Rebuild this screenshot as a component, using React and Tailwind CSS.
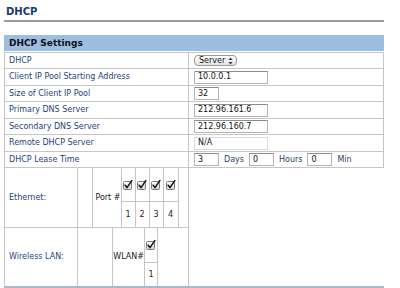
import React from "react";

function Check() {
  return (
    <svg width="10" height="10" viewBox="0 0 10 10" className="block">
      <defs>
        <linearGradient id="cbg" x1="0" y1="0" x2="0" y2="1">
          <stop offset="0" stopColor="#ffffff" />
          <stop offset="1" stopColor="#d4d4d4" />
        </linearGradient>
      </defs>
      <rect x="0.5" y="1.5" width="8" height="8" rx="1" fill="url(#cbg)" stroke="#7c7c7c" strokeWidth="1" />
      <path d="M2.2 5.2 L4 7.6 L8.8 0.6" fill="none" stroke="#111" strokeWidth="1.5" strokeLinecap="round" strokeLinejoin="round" />
    </svg>
  );
}

function Input({ w, value, faint }) {
  return (
    <div
      className={
        "h-[13px] flex items-center pl-[3px] bg-white text-[8px] leading-none text-[#111] border " +
        (faint ? "border-[#dadada]" : "border-[#b4b4b4] border-t-[#8c8c8c]")
      }
      style={{ width: w }}
    >
      {value}
    </div>
  );
}

const label = "text-[8px] leading-none text-[#1f3f7d]";

function Row({ name, h, children }) {
  return (
    <div className="flex border-b border-[#c6c6c6]" style={{ height: h }}>
      <div className={"w-[184px] shrink-0 border-r border-[#c6c6c6] flex items-center pl-[4px] " + label}>{name}</div>
      <div className="flex-1 flex items-center pl-[5px]">{children}</div>
    </div>
  );
}

export default function App() {
  return (
    <div className="w-[400px] h-[288px] bg-white overflow-hidden font-['DejaVu_Sans',sans-serif]">
      <div className="ml-[6px] mt-[6px] text-[10px] leading-[12px] font-bold text-[#1b3a6e]">DHCP</div>
      <div className="ml-[4px] mt-[2px] w-[380px] h-[2px] bg-[#9c9c9c]" />
      <div className="ml-[4px] mt-[13px] w-[380px]">
        <div className="h-[16px] bg-[#9ebde2] flex items-center pl-[5px] text-[9px] font-bold text-[#111] leading-none">
          DHCP Settings
        </div>
        <div className="mt-[1px] border-l border-r border-t border-[#c6c6c6]">
          <Row name="DHCP" h="16px">
            <div className="h-[11px] w-[43px] rounded-[4px] border border-[#9a9a9a] bg-gradient-to-b from-white to-[#e2e2e2] flex items-center justify-between pl-[4px] pr-[3px] text-[8px] leading-none text-[#111]">
              <span>Server</span>
              <svg width="5" height="8" viewBox="0 0 5 8" className="block">
                <path d="M2.5 0.5 L4.5 3 L0.5 3 Z" fill="#333" />
                <path d="M2.5 7.5 L4.5 5 L0.5 5 Z" fill="#333" />
              </svg>
            </div>
          </Row>
          <Row name="Client IP Pool Starting Address" h="17px">
            <Input w="74px" value="10.0.0.1" />
          </Row>
          <Row name="Size of Client IP Pool" h="16px">
            <Input w="25px" value="32" />
          </Row>
          <Row name="Primary DNS Server" h="17px">
            <Input w="74px" value="212.96.161.6" />
          </Row>
          <Row name="Secondary DNS Server" h="16px">
            <Input w="74px" value="212.96.160.7" />
          </Row>
          <Row name="Remote DHCP Server" h="17px">
            <Input w="74px" value="N/A" faint />
          </Row>
          <Row name="DHCP Lease Time" h="16px">
            <div className="flex items-center text-[8px] leading-none text-[#2e3f63]">
              <Input w="25px" value="3" />
              <span className="ml-[5px] mr-[5px]">Days</span>
              <Input w="25px" value="0" />
              <span className="ml-[5px] mr-[5px]">Hours</span>
              <Input w="25px" value="0" />
              <span className="ml-[5px]">Min</span>
            </div>
          </Row>
        </div>
        <div className="flex border-l border-[#c6c6c6] border-b-2 border-b-[#a8b6d0]">
          <div className="w-[184px] shrink-0 border-r border-[#c6c6c6]">
            <div className="flex h-[60px] border-b border-[#c6c6c6]">
              <div className={"w-[73px] shrink-0 border-r border-[#c6c6c6] flex items-center pl-[4px] " + label}>Ethernet:</div>
              <div className="flex-1 flex justify-center pl-[4px]">
                <div className="flex border-l border-r border-[#c6c6c6]">
                  <div className="w-[29px] border-r border-[#c6c6c6] flex items-center justify-end text-[8px] leading-none text-[#222]">
                    Port #
                  </div>
                  {["1", "2", "3", "4"].map((n, i) => (
                    <div key={n} className={"w-[14px] flex flex-col " + (i < 3 ? "border-r border-[#c6c6c6]" : "")}>
                      <div className="h-[34px] border-b border-[#c6c6c6] flex items-center justify-center">
                        <Check />
                      </div>
                      <div className="flex-1 flex items-center justify-center text-[8px] leading-none text-[#222]">{n}</div>
                    </div>
                  ))}
                </div>
              </div>
            </div>
            <div className="flex h-[58px]">
              <div className={"w-[73px] shrink-0 border-r border-[#c6c6c6] flex items-center pl-[4px] " + label}>Wireless LAN:</div>
              <div className="flex-1 flex justify-center pl-[4px]">
                <div className="flex border-l border-r border-[#c6c6c6]">
                  <div className="w-[32px] border-r border-[#c6c6c6] flex items-center justify-end text-[8px] leading-none text-[#222]">
                    WLAN#
                  </div>
                  <div className="w-[12px] flex flex-col">
                    <div className="h-[35px] border-b border-[#c6c6c6] flex items-center justify-center">
                      <Check />
                    </div>
                    <div className="flex-1 flex items-center justify-center text-[8px] leading-none text-[#222]">1</div>
                  </div>
                </div>
              </div>
            </div>
          </div>
          <div className="flex-1" />
        </div>
      </div>
    </div>
  );
}
